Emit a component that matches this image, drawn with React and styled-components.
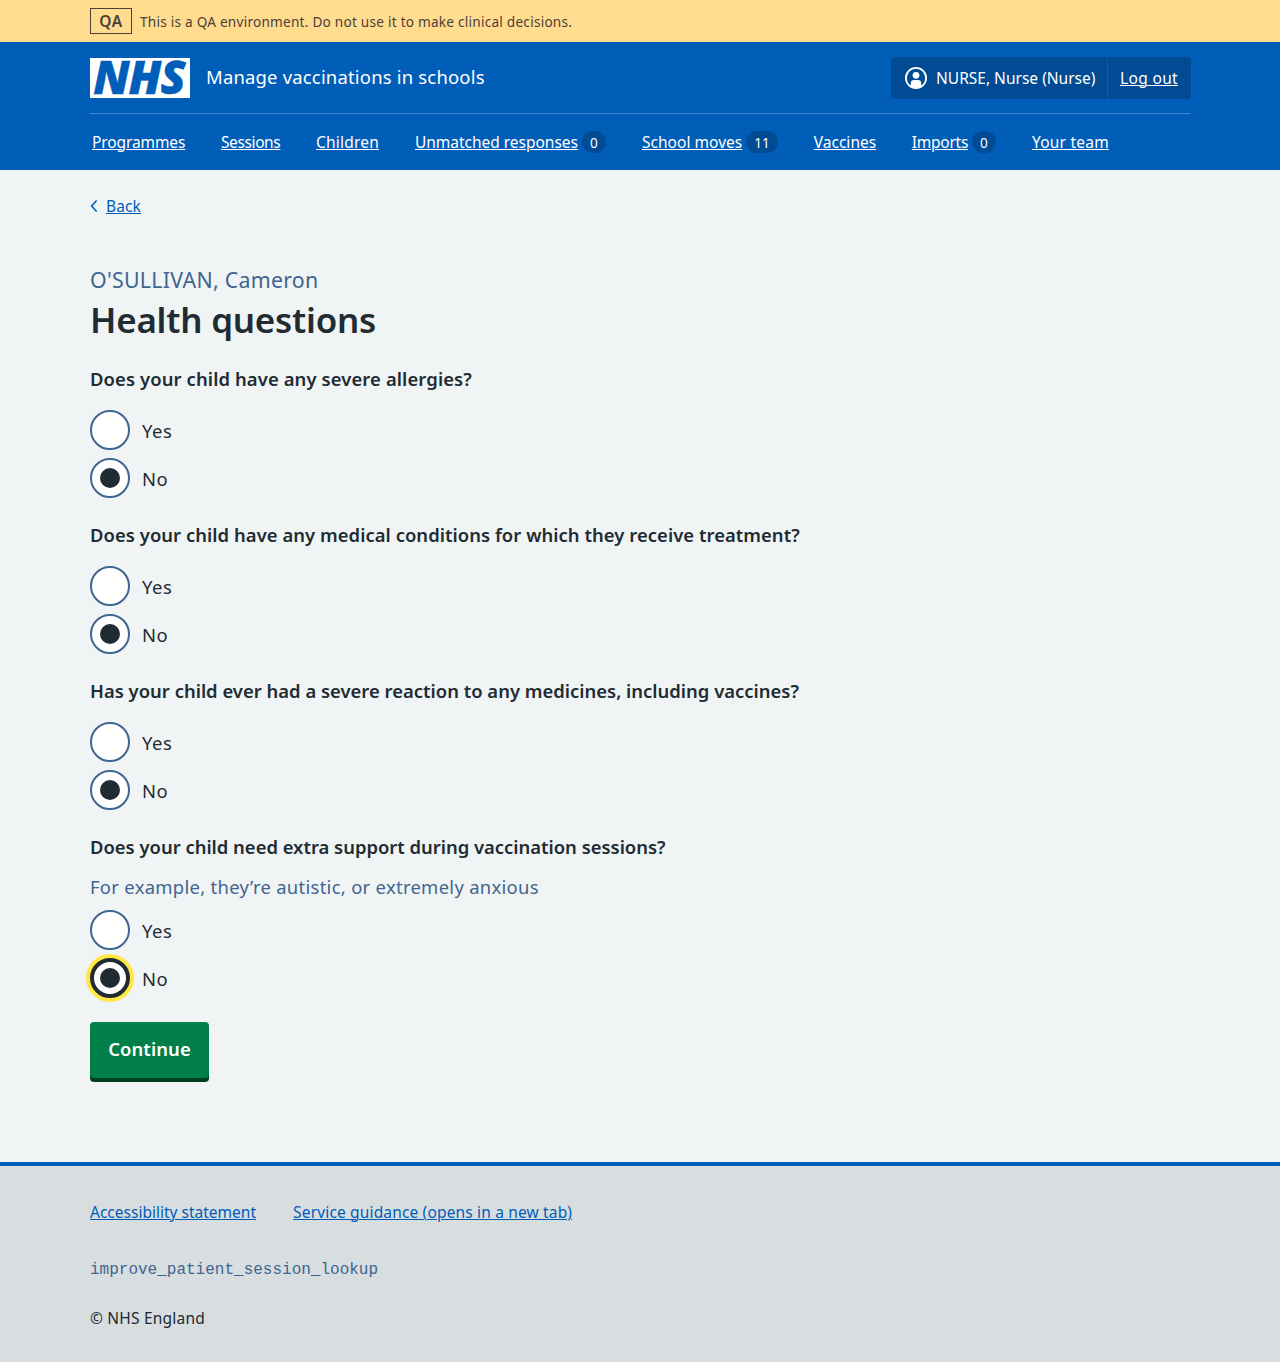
import React, { useState } from "react";
import styled, { createGlobalStyle, css } from "styled-components";

const blue = "#005eb8";
const darkBlue = "#004b93";
const ink = "#212b32";
const secondary = "#3f6590";

const GlobalStyle = createGlobalStyle`
  *, *::before, *::after { box-sizing: border-box; }
  body {
    margin: 0;
    background: #f0f4f5;
    color: ${ink};
    font-family: "Noto Sans", "Open Sans", Arial, sans-serif;
    font-size: 15.52px;
    line-height: 24px;
  }
`;

const tracking = css`
  letter-spacing: ${({ $track = 0 }) => $track}px;
`;

const Container = styled.div`
  width: 1100px;
  margin: 0 auto;
`;

const Banner = styled.div`
  height: 42px;
  background: #ffdc8e;
  color: #4d3e3a;
`;

const BannerRow = styled(Container)`
  display: flex;
  align-items: center;
  gap: 8px;
  height: 42px;
`;

const EnvironmentTag = styled.strong`
  width: 42px;
  height: 26px;
  border: 1px solid currentColor;
  text-align: center;
  font-size: 15.52px;
  line-height: 24px;
  font-weight: 600;
  letter-spacing: 0.6px;
`;

const BannerText = styled.span`
  font-size: 13.58px;
  padding-top: 1px;
  white-space: nowrap;
  ${tracking}
`;

const Header = styled.header`
  background: ${blue};
  color: #fff;
`;

const HeaderTop = styled(Container)`
  display: flex;
  align-items: center;
  height: 72px;
  border-bottom: 1px solid #4086ca;
`;

const Logo = styled.svg`
  display: block;
  overflow: visible;
  width: 100px;
  height: 40px;
  margin-right: 16px;
`;

const LogoText = styled.text`
  font-family: "Open Sans", sans-serif;
  font-size: 45.5px;
  font-weight: 800;
  font-style: italic;
  letter-spacing: -1px;
  fill: ${blue};
  stroke: ${blue};
  stroke-width: 0.4px;
`;

const ServiceName = styled.span`
  font-size: 18.43px;
  padding-bottom: 2px;
  white-space: nowrap;
  ${tracking}
`;

const Account = styled.div`
  display: flex;
  width: 300px;
  height: 42px;
  margin: 0 -1px 0 auto;
  border-radius: 4px;
  background: ${darkBlue};
`;

const AccountUser = styled.div`
  display: flex;
  align-items: center;
  gap: 9px;
  width: 217px;
  padding-left: 14px;
  border-right: 1px solid ${blue};
  white-space: nowrap;
  ${tracking}
`;

const AccountLink = styled.a`
  padding: 9px 0 0 12px;
  color: #fff;
  text-decoration: underline;
  text-decoration-thickness: 1px;
  text-underline-offset: 1px;
  white-space: nowrap;
  ${tracking}
`;

const Nav = styled(Container)`
  display: flex;
  align-items: center;
  gap: 36px;
  height: 56px;
  padding-left: 2px;
`;

const NavItem = styled.div`
  display: flex;
  align-items: center;
  gap: 4px;
`;

const Link = styled.a`
  color: ${({ $light }) => ($light ? "#fff" : blue)};
  text-decoration: underline;
  text-decoration-thickness: 1px;
  text-underline-offset: 1px;
  white-space: nowrap;
  ${tracking}
`;

const NavLink = styled(Link)`
  width: ${({ $w }) => $w}px;
`;

const Count = styled.span`
  min-width: 24px;
  height: 22px;
  padding: 0 8px;
  border-radius: 11px;
  background: ${darkBlue};
  font-size: 13.58px;
  line-height: 23px;
  text-align: center;
`;

const Main = styled.main`
  height: 992px;
  padding-top: 24px;
`;

const BackRow = styled.div`
  display: flex;
  align-items: center;
  gap: 8px;
  height: 24px;
`;

const Caption = styled.span`
  display: block;
  margin-top: 46px;
  font-size: 21.34px;
  line-height: 32px;
  color: ${secondary};
  ${tracking}
`;

const Title = styled.h1`
  margin: 2px 0 23px;
  font-size: 34.92px;
  line-height: 44px;
  font-weight: 600;
  ${tracking}
`;

const Question = styled.fieldset`
  margin: 0 0 23px;
  padding: 0;
  border: 0;
`;

const Legend = styled.legend`
  padding: 0;
  margin-bottom: ${({ $hinted }) => ($hinted ? 12 : 17)}px;
  font-size: 18.43px;
  line-height: 28px;
  font-weight: 600;
  white-space: nowrap;
  ${tracking}
`;

const Hint = styled.div`
  margin-bottom: 9px;
  font-size: 18.43px;
  line-height: 28px;
  color: ${secondary};
  ${tracking}
`;

const Options = styled.div`
  display: grid;
  gap: 8px;
`;

const Option = styled.label`
  display: flex;
  align-items: center;
  gap: 12px;
  height: 40px;
`;

const Radio = styled.input`
  appearance: none;
  display: grid;
  place-items: center;
  width: 40px;
  height: 40px;
  margin: 0;
  border: 2px solid ${secondary};
  border-radius: 50%;
  background: #fff;

  &:checked::before {
    content: "";
    width: 20px;
    height: 20px;
    border-radius: 50%;
    background: ${ink};
  }

  ${({ $highlighted }) =>
    $highlighted &&
    css`
      border: 4px solid ${ink};
      box-shadow: 0 0 0 4px #ffe747;
    `}
`;

const OptionText = styled.span`
  padding-top: 2px;
  font-size: 18.43px;
  ${tracking}
`;

const Continue = styled.button`
  display: block;
  width: 119px;
  height: 56px;
  margin-top: 24px;
  padding: 0 0 2px;
  border: 0;
  border-radius: 4px;
  background: #007f48;
  box-shadow: 0 4px 0 #00401e;
  color: #fff;
  font-family: inherit;
  font-size: 18.43px;
  font-weight: 600;
  line-height: 28px;
  ${tracking}
`;

const Footer = styled.footer`
  height: 200px;
  padding-top: 34px;
  border-top: 4px solid ${blue};
  background: #d8dde0;
`;

const FooterLinks = styled.div`
  display: flex;
  gap: 37px;
`;

const Branch = styled.div`
  margin-top: 34px;
  font-family: "Liberation Mono", monospace;
  font-size: 16px;
  color: ${secondary};
`;

const Copyright = styled.div`
  margin-top: 24px;
  ${tracking}
`;

const navItems = [
  { label: "Programmes", w: 93, track: -0.11 },
  { label: "Sessions", w: 59, track: -0.4 },
  { label: "Children", w: 63, track: 0.2 },
  { label: "Unmatched responses", w: 163, track: -0.03, count: 0 },
  { label: "School moves", w: 100.2, track: 0.02, count: 11 },
  { label: "Vaccines", w: 62, track: 0.01 },
  { label: "Imports", w: 56.2, track: -0.26, count: 0 },
  { label: "Your team", w: 77, track: 0.22 },
];

const questions = [
  { id: "allergies", text: "Does your child have any severe allergies?", track: 0.11 },
  {
    id: "conditions",
    text: "Does your child have any medical conditions for which they receive treatment?",
    track: 0.048,
  },
  {
    id: "reaction",
    text: "Has your child ever had a severe reaction to any medicines, including vaccines?",
    track: 0.008,
  },
  {
    id: "support",
    text: "Does your child need extra support during vaccination sessions?",
    track: -0.008,
    hint: "For example, they’re autistic, or extremely anxious",
  },
];

function UserIcon() {
  return (
    <svg width="22" height="22" viewBox="0 0 22 22" aria-hidden="true">
      <circle cx="11" cy="11" r="10.1" fill="none" stroke="#fff" strokeWidth="1.8" />
      <circle cx="11" cy="8.3" r="3.4" fill="#fff" />
      <path d="M5.8 19.5v-3.4a3.2 3.2 0 0 1 3.2-3.2h4a3.2 3.2 0 0 1 3.2 3.2v3.4A10 10 0 0 1 11 21a10 10 0 0 1-5.2-1.5z" fill="#fff" />
    </svg>
  );
}

function NhsLogo() {
  return (
    <Logo viewBox="0 0 100 40" role="img" aria-label="NHS">
      <rect width="100" height="40" fill="#fff" />
      <LogoText x="3.2" y="36" textLength="91.5" lengthAdjust="spacingAndGlyphs">
        NHS
      </LogoText>
    </Logo>
  );
}

export default function App() {
  const [answers, setAnswers] = useState({});
  return (
    <>
      <GlobalStyle />
      <Banner>
        <BannerRow>
          <EnvironmentTag>QA</EnvironmentTag>
          <BannerText $track={0.25}>
            This is a QA environment. Do not use it to make clinical decisions.
          </BannerText>
        </BannerRow>
      </Banner>
      <Header>
        <HeaderTop>
          <NhsLogo />
          <ServiceName $track={0.205}>Manage vaccinations in schools</ServiceName>
          <Account>
            <AccountUser $track={0}>
              <UserIcon />
              NURSE, Nurse (Nurse)
            </AccountUser>
            <AccountLink href="#" $track={0.333}>Log out</AccountLink>
          </Account>
        </HeaderTop>
        <Nav as="nav">
          {navItems.map(({ label, w, track, count }) => (
            <NavItem key={label}>
              <NavLink href="#" $light $w={w} $track={track}>{label}</NavLink>
              {count !== undefined && <Count>{count}</Count>}
            </NavItem>
          ))}
        </Nav>
      </Header>
      <Main>
        <Container>
          <BackRow>
            <svg width="8" height="12" viewBox="0 0 8 12" aria-hidden="true">
              <path d="M6.6 0.5 1.6 6l5 5.5" fill="none" stroke={blue} strokeWidth="1.6" />
            </svg>
            <Link href="#" $track={0.12}>Back</Link>
          </BackRow>
          <Caption $track={0.276}>O'SULLIVAN, Cameron</Caption>
          <Title $track={-0.21}>Health questions</Title>
          {questions.map(({ id, text, track, hint }) => (
            <Question key={id}>
              <Legend $track={track} $hinted={Boolean(hint)}>{text}</Legend>
              {hint && <Hint $track={0.3}>{hint}</Hint>}
              <Options>
                {["Yes", "No"].map((value) => (
                  <Option key={value}>
                    <Radio
                      type="radio"
                      name={id}
                      checked={(answers[id] || "No") === value}
                      onChange={() => setAnswers({ ...answers, [id]: value })}
                      $highlighted={id === "support" && value === "No"}
                    />
                    <OptionText $track={0.6}>{value}</OptionText>
                  </Option>
                ))}
              </Options>
            </Question>
          ))}
          <Continue type="button" $track={0.1}>Continue</Continue>
        </Container>
      </Main>
      <Footer>
        <Container>
          <FooterLinks>
            <Link href="#" $track={0}>Accessibility statement</Link>
            <Link href="#" $track={0.15}>Service guidance (opens in a new tab)</Link>
          </FooterLinks>
          <Branch>improve_patient_session_lookup</Branch>
          <Copyright $track={0.2}>© NHS England</Copyright>
        </Container>
      </Footer>
    </>
  );
}
